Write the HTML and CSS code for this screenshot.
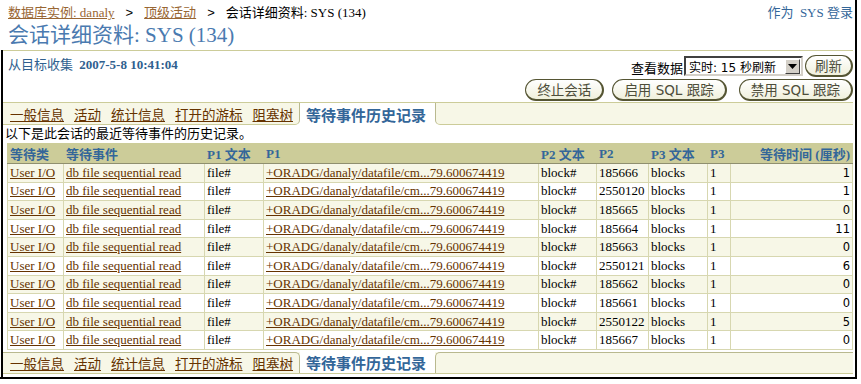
FILE: index.html
```html
<!DOCTYPE html>
<html lang="zh">
<head>
<meta charset="utf-8">
<title>会话详细资料: SYS (134)</title>
<link rel="stylesheet" href="styles.css">
</head>
<body>
<div class="frame">
  <div class="top">
    <div class="crumbs">
      <a href="#">数据库实例: danaly</a>
      <span class="sep">&gt;</span>
      <a href="#">顶级活动</a>
      <span class="sep">&gt;</span>
      <span class="cur">会话详细资料: SYS (134)</span>
    </div>
    <div class="login">作为&nbsp; SYS 登录</div>
  </div>
  <h1 class="title">会话详细资料: SYS (134)</h1>
  <div class="body">
    <div class="info">
      <div class="collected">从目标收集 <b>2007-5-8 10:41:04</b></div>
      <div class="controls">
        <div class="ctl-row">
          <span class="view-label">查看数据</span>
          <span class="select"><span class="select-text">实时: 15 秒刷新</span><span class="select-btn"><svg width="9" height="5" viewBox="0 0 9 5"><path d="M0 0h9L4.5 5z" fill="#000"/></svg></span></span>
          <button class="btn btn-small">刷新</button>
        </div>
        <div class="ctl-row">
          <button class="btn">终止会话</button>
          <button class="btn">启用 SQL 跟踪</button>
          <button class="btn">禁用 SQL 跟踪</button>
        </div>
      </div>
    </div>
    <div class="tabs tabs-top">
      <div class="tabs-left">
        <a href="#">一般信息</a><a href="#">活动</a><a href="#">统计信息</a><a href="#">打开的游标</a><a href="#">阻塞树</a>
      </div>
      <div class="tab-active">等待事件历史记录</div>
      <div class="tabs-right"></div>
    </div>
    <p class="desc">以下是此会话的最近等待事件的历史记录。</p>
    <table class="grid">
      <colgroup>
        <col style="width:56px"><col style="width:141px"><col style="width:59px"><col style="width:275px"><col style="width:58px"><col style="width:52px"><col style="width:59px"><col style="width:23px"><col style="width:122px">
      </colgroup>
      <thead>
        <tr><th>等待类</th><th>等待事件</th><th>P1 文本</th><th>P1</th><th>P2 文本</th><th>P2</th><th>P3 文本</th><th>P3</th><th class="num">等待时间 (厘秒)</th></tr>
      </thead>
      <tbody id="rows"></tbody>
    </table>
    <div class="tabs tabs-bottom">
      <div class="tabs-left">
        <a href="#">一般信息</a><a href="#">活动</a><a href="#">统计信息</a><a href="#">打开的游标</a><a href="#">阻塞树</a>
      </div>
      <div class="tab-active">等待事件历史记录</div>
      <div class="tabs-right"></div>
    </div>
  </div>
</div>
<script src="app.js"></script>
</body>
</html>
```
FILE: app.js
```js
const data = [
  ["185666", "1"], ["2550120", "1"], ["185665", "0"], ["185664", "11"], ["185663", "0"],
  ["2550121", "6"], ["185662", "0"], ["185661", "0"], ["2550122", "5"], ["185667", "0"]
];
const tb = document.getElementById("rows");
data.forEach(([p2, t]) => {
  const tr = document.createElement("tr");
  tr.innerHTML =
    '<td><a href="#">User I/O</a></td>' +
    '<td><a href="#">db file sequential read</a></td>' +
    '<td>file#</td>' +
    '<td><a href="#">+ORADG/danaly/datafile/cm...79.600674419</a></td>' +
    '<td>block#</td>' +
    '<td>' + p2 + '</td>' +
    '<td>blocks</td>' +
    '<td>1</td>' +
    '<td class="num">' + t + '</td>';
  tb.appendChild(tr);
});
```
FILE: styles.css
```css
* { box-sizing: border-box; }
html, body { margin: 0; padding: 0; background: #fff; }
body {
  font-family: "Liberation Serif", "Noto Sans CJK SC", serif;
  font-size: 13px;
  color: #000;
}
a { color: #663300; text-decoration: underline; }

.frame {
  width: 857px;
  height: 379px;
  border-right: 2px solid #000;
  border-bottom: 2px solid #000;
  display: flex;
  flex-direction: column;
}

.top {
  display: flex;
  justify-content: space-between;
  padding: 4px 2px 0 8px;
  line-height: 17px;
  height: 21px;
}
.crumbs { display: flex; gap: 10px; white-space: nowrap; }
.crumbs a { color: #996633; }
.crumbs .sep { font-family: "Liberation Sans", sans-serif; color: #000; padding: 0 1px; }
.login { color: #336699; white-space: nowrap; }

.title {
  margin: 0;
  padding-left: 8px;
  font-weight: normal;
  font-size: 21px;
  line-height: 29px;
  height: 29px;
  color: #4a7ab0;
  white-space: nowrap;
}

.body {
  flex: 1;
  margin-left: 1px;
  border-left: 2px solid #000;
  display: flex;
  flex-direction: column;
}

.info {
  border-top: 1px solid #cccc99;
  margin-right: 2px;
  height: 52px;
  display: flex;
  justify-content: space-between;
  padding: 4px 0 0 5px;
}
.collected {
  color: #2f5f8f;
  font-size: 13px;
  line-height: 16px;
  padding-top: 2px;
  white-space: nowrap;
}
.collected b { margin-left: 3px; }

.controls {
  display: flex;
  flex-direction: column;
  align-items: flex-end;
  gap: 2px;
}
.ctl-row {
  display: flex;
  align-items: center;
  gap: 8px;
  height: 22px;
}
.ctl-row:first-child { gap: 0; }
.ctl-row .btn:last-child { margin-left: 4px; }
.ctl-row:first-child .btn:last-child { margin-left: 0; }
.view-label { margin-right: 1px; padding-top: 3px; white-space: nowrap; }
.select {
  flex-shrink: 0;
  display: flex;
  align-items: center;
  width: 119px;
  height: 20px;
  border: 2px solid;
  border-color: #404040 #d4d0c8 #d4d0c8 #404040;
  background: #fff;
  font-family: "DejaVu Sans", "Noto Sans CJK SC", sans-serif;
  font-size: 12px;
  padding-left: 3px;
  justify-content: space-between;
  margin-right: 2px;
  white-space: nowrap;
}
.select-btn {
  width: 15px;
  height: 15px;
  background: #d4d0c8;
  border: 1px solid;
  border-color: #fff #404040 #404040 #fff;
  display: flex;
  align-items: center;
  justify-content: center;
  margin-right: 1px;
}

.btn {
  flex-shrink: 0;
  white-space: nowrap;
  font-family: "DejaVu Sans", "Noto Sans CJK SC", sans-serif;
  font-size: 13.5px;
  color: #4d4d3a;
  height: 22px;
  padding: 0 11px;
  border: 1px solid #555533;
  border-right-width: 2px;
  border-bottom-width: 2px;
  border-radius: 11px;
  background: linear-gradient(#ffffff, #f0f0dc);
  line-height: 18px;
}
.btn-small { padding: 0 9px; }

/* tabs */
.tabs {
  display: flex;
  height: 23px;
  margin-right: 2px;
  background: #fff;
}
.tabs a {
  color: #663300;
  margin-right: 10px;
  white-space: nowrap;
  flex-shrink: 0;
  font-size: 13.5px;
}
.tabs-left {
  display: flex;
  align-items: center;
  padding-left: 7px;
  width: 297px;
  flex-shrink: 0;
  background: #f7f7e7;
}
.tab-active {
  width: 135px;
  flex-shrink: 0;
  white-space: nowrap;
  color: #336699;
  font-weight: bold;
  font-size: 15px;
  display: flex;
  align-items: center;
  padding-left: 6px;
  background: #fff;
}
.tabs-right { flex: 1; background: #f7f7e7; }

.tabs-top { border-top: 1px solid #cccc99; }
.tabs-top .tabs-left {
  border-bottom: 1px solid #cccc99;
  border-right: 1px solid #b9b98f;
  border-bottom-right-radius: 5px;
}
.tabs-top .tabs-right {
  border-bottom: 1px solid #cccc99;
  border-left: 1px solid #b9b98f;
  border-bottom-left-radius: 5px;
}

.desc {
  margin: 0;
  padding: 1px 0 0 2px;
  line-height: 16px;
  height: 18px;
  white-space: nowrap;
}

.grid {
  margin-left: 4px;
  width: 845px;
  border-collapse: collapse;
  table-layout: fixed;
}
.grid th, .grid td {
  padding: 0 2px;
  text-align: left;
  white-space: nowrap;
  overflow: hidden;
}
.grid th {
  background: #cccc99;
  color: #336699;
  font-weight: bold;
  height: 20px;
  border: 1px solid #cccc99;
  border-left: 1px solid #8f8f6f;
  border-bottom: 1px solid #8f8f6f;
}
.grid th:first-child { border-left-color: #cccc99; }
.grid td {
  height: 18.6px;
  border: 1px solid #d7d7b0;
  line-height: 16px;
}
.grid tbody tr:nth-child(odd) td { background: #f7f7e7; }
.grid tbody tr:nth-child(even) td { background: #fff; }
.grid .num { text-align: right; }
.grid td.num { font-family: "DejaVu Sans", sans-serif; font-size: 11.5px; }

.tabs-bottom {
  margin-top: 2px;
  height: 22px;
  border-bottom: 1px solid #cccc99;
  background: #f7f7e7;
}
.tabs-bottom .tabs-left {
  border-top: 1px solid #b9b98f;
  border-right: 1px solid #b9b98f;
  border-top-right-radius: 5px;
}
.tabs-bottom .tab-active { background: #fff; }
.tabs-bottom .tabs-right {
  border-top: 1px solid #b9b98f;
  border-left: 1px solid #b9b98f;
  border-top-left-radius: 5px;
}
```
